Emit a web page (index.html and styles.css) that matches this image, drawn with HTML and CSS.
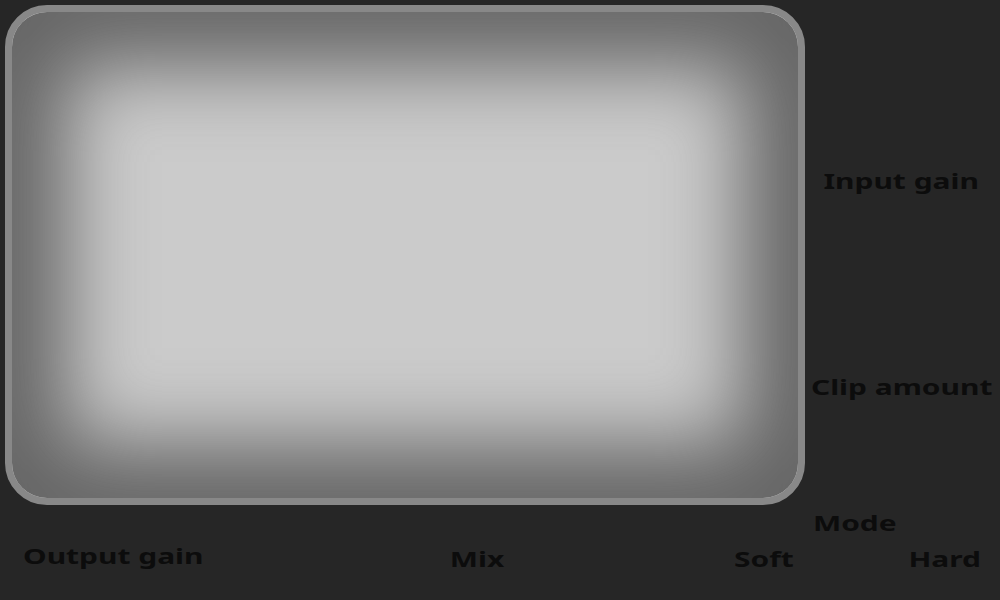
FILE: index.html
```html
<!DOCTYPE html>
<html>
<head>
<meta charset="utf-8">
<link rel="stylesheet" href="styles.css">
</head>
<body>
<div class="app">
  <div class="top">
    <div class="panel"></div>
    <div class="side">
      <div class="label input-gain">Input gain</div>
      <div class="label clip">Clip amount</div>
    </div>
  </div>
  <div class="footer">
    <div class="out-box"><span class="label out-gain">Output gain</span></div>
    <div class="mix-box"><span class="label">Mix</span></div>
    <div class="mode-group">
      <span class="label mode">Mode</span>
      <span class="label soft">Soft</span>
      <span class="label hard">Hard</span>
    </div>
  </div>
</div>
</body>
</html>
```
FILE: styles.css
```css
html, body {
  margin: 0;
  padding: 0;
  background: #262626;
}
.app {
  width: 1000px;
  height: 600px;
  display: flex;
  flex-direction: column;
  font-family: "Noto Sans", sans-serif;
  font-weight: 700;
  color: #0c0c0c;
}
.top {
  display: flex;
  height: 510px;
}
.panel {
  box-sizing: border-box;
  flex: none;
  margin: 5px;
  width: 800px;
  height: 500px;
  border: 7px solid #888888;
  border-radius: 42px;
  background: #cbcbcb;
  box-shadow: inset 0 0 80px 55px #666666;
}
.label {
  display: inline-block;
  font-size: 22px;
  line-height: 30px;
  white-space: nowrap;
  transform: scaleX(1.36);
}
.side {
  flex: 1;
  display: flex;
  flex-direction: column;
  align-items: center;
  padding-right: 7px;
}
.input-gain {
  margin-top: 165px;
}
.clip {
  margin-top: 176px;
}
.footer {
  flex: 1;
  display: flex;
  align-items: flex-start;
}
.out-box {
  margin-left: 23px;
  margin-top: 30px;
  width: 180px;
}
.out-gain {
  transform-origin: left center;
}
.mix-box {
  margin-left: 197px;
  width: 154px;
  margin-top: 33px;
  display: flex;
  justify-content: center;
}
.mode-group {
  margin-left: 155px;
  width: 291px;
  margin-top: -3px;
  display: grid;
  grid-template-columns: 110px 70px 111px;
  row-gap: 6px;
}
.mode {
  grid-column: 1 / 4;
  grid-row: 1;
  justify-self: center;
}
.soft {
  grid-column: 1;
  grid-row: 2;
  justify-self: center;
}
.hard {
  grid-column: 3;
  grid-row: 2;
  justify-self: center;
}
```
